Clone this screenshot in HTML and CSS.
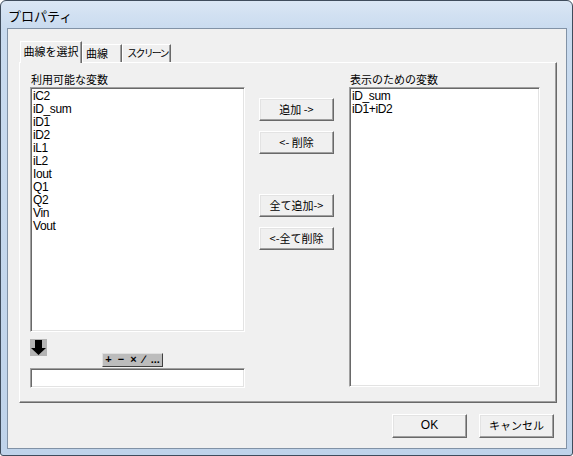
FILE: index.html
```html
<!DOCTYPE html>
<html lang="ja">
<head>
<meta charset="utf-8">
<title>プロパティ</title>
<link rel="stylesheet" href="styles.css">
</head>
<body>
<div class="window">
  <div class="titlebar"><span class="title">プロパティ</span></div>
  <div class="client">
    <div class="tabs">
      <div class="tab active">曲線を選択</div>
      <div class="tab t2">曲線</div>
      <div class="tab t3">スクリーン</div>
    </div>
    <div class="panel">
      <div class="col left">
        <div class="label">利用可能な変数</div>
        <div class="listbox list-left">
          <div class="item">iC2</div>
          <div class="item">iD_sum</div>
          <div class="item">iD1</div>
          <div class="item">iD2</div>
          <div class="item">iL1</div>
          <div class="item">iL2</div>
          <div class="item">Iout</div>
          <div class="item">Q1</div>
          <div class="item">Q2</div>
          <div class="item">Vin</div>
          <div class="item">Vout</div>
        </div>
        <div class="tools">
          <div class="arrow">
            <svg width="17" height="17" viewBox="0 0 17 17"><rect width="17" height="17" fill="#b4b4b4"/><path d="M5 1h7v8h4l-7.5 7L1 9h4z" fill="#000"/></svg>
          </div>
          <div class="ops">+&nbsp;&nbsp;−&nbsp;&nbsp;×&nbsp;&nbsp;∕&nbsp;&nbsp;...</div>
        </div>
        <div class="inputbox"></div>
      </div>
      <div class="col mid">
        <div class="btn b1">追加 -&gt;</div>
        <div class="btn b2">&lt;- 削除</div>
        <div class="btn b3">全て追加-&gt;</div>
        <div class="btn b4">&lt;-全て削除</div>
      </div>
      <div class="col right">
        <div class="label">表示のための変数</div>
        <div class="listbox list-right">
          <div class="item">iD_sum</div>
          <div class="item">iD1+iD2</div>
        </div>
      </div>
    </div>
    <div class="footer">
      <div class="btn ok">OK</div>
      <div class="btn cancel">キャンセル</div>
    </div>
  </div>
</div>
</body>
</html>
```
FILE: styles.css
```css
* { box-sizing: border-box; }
html, body { margin: 0; padding: 0; background: #fff; }
body {
  width: 573px;
  height: 456px;
  font-family: "Noto Sans CJK JP", "Liberation Sans", sans-serif;
  font-size: 11px;
  color: #000;
}
.window {
  width: 573px;
  height: 456px;
  border: 1px solid #3f4c5c;
  border-radius: 6px 6px 3px 3px;
  background: linear-gradient(#dae6f4 0px, #c9dbef 28px, #bfd3ea 100%);
  display: flex;
  flex-direction: column;
}
.titlebar {
  height: 27px;
  padding-left: 7px;
  display: flex;
  align-items: center;
}
.title {
  font-size: 13px;
  line-height: 15px;
  color: #000;
  padding-top: 2px;
}
.client {
  margin: 0 5px 6px 6px;
  flex: 1;
  border: 1px solid #8192a6;
  background: #f0f0f0;
  padding-top: 12px;
  display: flex;
  flex-direction: column;
}
.tabs {
  display: flex;
  align-items: flex-end;
  height: 21px;
  margin-left: 12px;
  position: relative;
  z-index: 2;
}
.tab {
  height: 18px;
  background: #f0f0f0;
  border-top: 1px solid #fff;
  border-left: 1px solid #fff;
  border-right: 1px solid #696969;
  box-shadow: inset -1px 0 #a0a0a0;
  text-align: center;
  line-height: 16px;
  font-size: 11px;
  white-space: nowrap;
}
.tab.active {
  width: 62px;
  height: 22px;
  margin-bottom: -1px;
  line-height: 18px;
  padding-bottom: 2px;
}
.tab.t2 { width: 40px; text-align: left; padding-left: 3px; }
.tab.t3 { width: 49px; font-size: 10px; letter-spacing: -1.8px; padding-left: 2px; }
.panel {
  margin-left: 11px;
  width: 538px;
  height: 341px;
  border-top: 1px solid #fff;
  border-left: 1px solid #fff;
  border-right: 1px solid #696969;
  border-bottom: 1px solid #696969;
  box-shadow: inset -1px -1px #a0a0a0;
  padding-left: 10px;
  display: flex;
  gap: 14px;
}
.col { display: flex; flex-direction: column; }
.left { width: 215px; }
.mid { width: 75px; padding-top: 35px; margin-right: 1px; }
.right { width: 191px; }
.label {
  height: 24px;
  padding-top: 8px;
  line-height: 16px;
  font-size: 11px;
  padding-left: 1px;
  white-space: nowrap;
}
.listbox {
  background: #fff;
  border-top: 1px solid #a0a0a0;
  border-left: 1px solid #a0a0a0;
  border-right: 1px solid #fff;
  border-bottom: 1px solid #fff;
  box-shadow: inset 1px 1px #696969, inset -1px -1px #e3e3e3;
  padding: 2px 0 0 2px;
  font-family: "Liberation Sans", sans-serif;
  font-size: 12px;
  line-height: 13px;
  letter-spacing: -0.4px;
}
.list-left { height: 245px; }
.list-right { height: 300px; }
.item { height: 13px; white-space: nowrap; }
.tools {
  height: 36px;
  display: flex;
  align-items: flex-start;
}
.arrow { margin-top: 7px; width: 17px; height: 17px; }
.arrow svg { display: block; }
.ops {
  margin-top: 21px;
  margin-left: 55px;
  width: 61px;
  height: 14px;
  background: #bcbcbc;
  border-top: 1px solid #e0e0e0;
  border-left: 1px solid #e0e0e0;
  border-right: 1px solid #404040;
  border-bottom: 1px solid #404040;
  font-family: "Liberation Sans", sans-serif;
  font-size: 11px;
  font-weight: bold;
  line-height: 11px;
  text-align: center;
  white-space: nowrap;
}
.inputbox {
  height: 20px;
  background: #fff;
  border-top: 1px solid #a0a0a0;
  border-left: 1px solid #a0a0a0;
  border-right: 1px solid #fff;
  border-bottom: 1px solid #fff;
  box-shadow: inset 1px 1px #696969, inset -1px -1px #e3e3e3;
}
.btn {
  height: 23px;
  background: #f0f0f0;
  border-top: 1px solid #fff;
  border-left: 1px solid #fff;
  border-right: 1px solid #696969;
  border-bottom: 1px solid #696969;
  box-shadow: inset -1px -1px #a0a0a0, inset 1px 1px #e3e3e3;
  text-align: center;
  line-height: 20px;
  font-size: 11px;
  white-space: nowrap;
}
.b2 { margin-top: 10px; }
.b3 { margin-top: 40px; }
.b4 { margin-top: 10px; }
.footer {
  display: flex;
  justify-content: flex-end;
  gap: 12px;
  padding-right: 12px;
  margin-top: 11px;
}
.ok, .cancel { width: 75px; height: 24px; line-height: 21px; }
.ok { font-family: "Liberation Sans", sans-serif; font-size: 12px; }
```
